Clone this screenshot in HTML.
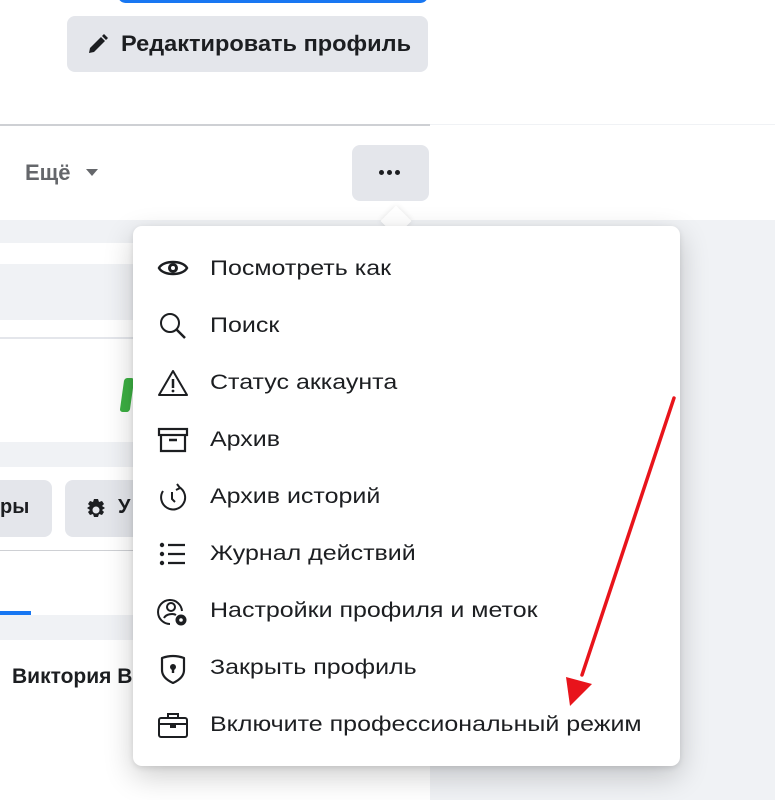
<!DOCTYPE html>
<html><head><meta charset="utf-8"><style>
body{margin:0;width:775px;height:800px;position:relative;overflow:hidden;background:#f0f2f5;font-family:"Liberation Sans",sans-serif;}
.a{position:absolute;}
.mi{position:absolute;left:0;width:547px;height:57px;}
.mi svg{position:absolute;left:24px;top:15px;}
.mi span{position:absolute;left:77px;top:17px;font-size:21px;color:#1c1e21;transform:scaleX(1.19);transform-origin:0 0;white-space:nowrap;}
</style></head><body>
<div class="a" style="left:0;top:0;width:775px;height:220px;background:#fff"></div>
<div class="a" style="left:0;top:124px;width:430px;height:2px;background:#ced0d4"></div>
<div class="a" style="left:430px;top:124px;width:345px;height:1px;background:#f0f2f5"></div>
<div class="a" style="left:118px;top:-12px;width:310px;height:15px;background:#1877f2;border-radius:8px"></div>
<div class="a" style="left:67px;top:16px;width:361px;height:56px;background:#e4e6eb;border-radius:8px"></div>
<svg class="a" style="left:86px;top:32px" width="24" height="24" viewBox="0 0 24 24"><path d="M3 21l1-5L15 5l4 4L8 20z M16 4l2-2 4 4-2 2z" fill="#1c1e21"/></svg>
<div class="a" style="left:121px;top:31px;font-size:22px;font-weight:bold;color:#1c1e21;transform:scaleX(1.07);transform-origin:0 0;white-space:nowrap">Редактировать профиль</div>
<div class="a" style="left:25px;top:160px;font-size:22px;font-weight:bold;color:#65676b">Ещё</div>
<div class="a" style="left:86px;top:169px;width:0;height:0;border-left:6px solid transparent;border-right:6px solid transparent;border-top:7px solid #65676b"></div>
<div class="a" style="left:352px;top:145px;width:77px;height:56px;background:#e4e6eb;border-radius:8px"></div>
<div class="a" style="left:379px;top:170px;font-size:0">
<span style="display:inline-block;width:5px;height:5px;border-radius:50%;background:#1c1e21;margin-right:3px"></span><span style="display:inline-block;width:5px;height:5px;border-radius:50%;background:#1c1e21;margin-right:3px"></span><span style="display:inline-block;width:5px;height:5px;border-radius:50%;background:#1c1e21"></span></div>
<!-- left column -->
<div class="a" style="left:0;top:243px;width:430px;height:199px;background:#fff"></div>
<div class="a" style="left:0;top:264px;width:430px;height:56px;background:#f0f2f5"></div>
<div class="a" style="left:0;top:337px;width:430px;height:2px;background:#e4e6eb"></div>
<div class="a" style="left:122px;top:378px;width:10px;height:34px;background:#3cb043;border-radius:3px;transform:skewX(-8deg)"></div>
<div class="a" style="left:0;top:467px;width:430px;height:148px;background:#fff"></div>
<div class="a" style="left:-10px;top:480px;width:62px;height:57px;background:#e4e6eb;border-radius:8px"></div>
<div class="a" style="left:0;top:496px;font-size:20px;font-weight:bold;color:#1c1e21">ры</div>
<div class="a" style="left:65px;top:480px;width:100px;height:57px;background:#e4e6eb;border-radius:8px"></div>
<svg class="a" style="left:84px;top:498px" width="24" height="24" viewBox="0 0 24 24"><path d="M10 1h4l1 3 3-1 2 3-2 2 3 2v0l-3 2 2 2-2 3-3-1-1 3h-4l-1-3-3 1-2-3 2-2-3-2 3-2-2-2 2-3 3 1z" fill="#1c1e21"/><circle cx="12" cy="12" r="3.5" fill="#e4e6eb"/></svg>
<div class="a" style="left:118px;top:496px;font-size:20px;font-weight:bold;color:#1c1e21">У</div>
<div class="a" style="left:0;top:550px;width:430px;height:1px;background:#ced0d4"></div>
<div class="a" style="left:0;top:611px;width:31px;height:4px;background:#1877f2"></div>
<div class="a" style="left:0;top:640px;width:430px;height:160px;background:#fff"></div>
<div class="a" style="left:12px;top:665px;font-size:21px;font-weight:bold;color:#1c1e21">Виктория В</div>
<!-- menu -->
<div class="a" style="left:385px;top:210px;width:22px;height:22px;background:#fff;transform:rotate(45deg);box-shadow:0 0 6px rgba(0,0,0,.1)"></div>
<div class="a" style="left:133px;top:226px;width:547px;height:540px;background:#fff;border-radius:9px;box-shadow:0 10px 30px rgba(0,0,0,.2),0 2px 6px rgba(0,0,0,.1)">
<div class="mi" style="top:14px"><svg width="32" height="26" viewBox="0 0 32 26"><path d="M2 13C6 5 26 5 30 13C26 21 6 21 2 13Z" fill="none" stroke="#1c1e21" stroke-width="2.5"/><circle cx="16" cy="13" r="5" fill="#1c1e21"/><circle cx="16" cy="13" r="2" fill="#fff"/></svg><span>Посмотреть как</span></div>
<div class="mi" style="top:71px"><svg width="32" height="28" viewBox="0 0 32 28"><circle cx="13" cy="11" r="9" fill="none" stroke="#1c1e21" stroke-width="2"/><path d="M19.5 17.5L28 26" stroke="#1c1e21" stroke-width="2.5"/></svg><span>Поиск</span></div>
<div class="mi" style="top:128px"><svg width="32" height="28" viewBox="0 0 32 28"><path d="M16 2L30 26H2Z" fill="none" stroke="#1c1e21" stroke-width="2" stroke-linejoin="round"/><path d="M16 10v9" stroke="#1c1e21" stroke-width="2.5"/><circle cx="16" cy="22" r="1.4" fill="#1c1e21"/></svg><span>Статус аккаунта</span></div>
<div class="mi" style="top:185px"><svg width="32" height="28" viewBox="0 0 32 28"><rect x="2" y="3" width="28" height="6" fill="none" stroke="#1c1e21" stroke-width="2.2"/><path d="M4 9v16h24V9" fill="none" stroke="#1c1e21" stroke-width="2.2"/><path d="M12 14h8" stroke="#1c1e21" stroke-width="2.5"/></svg><span>Архив</span></div>
<div class="mi" style="top:242px"><svg width="32" height="30" viewBox="0 0 32 30"><path d="M22 4A12 12 0 1 1 6 8" fill="none" stroke="#1c1e21" stroke-width="2"/><path d="M20 1l3 4-4 2" fill="none" stroke="#1c1e21" stroke-width="2"/><path d="M15 9v7l3 3" fill="none" stroke="#1c1e21" stroke-width="2"/></svg><span>Архив историй</span></div>
<div class="mi" style="top:299px"><svg width="32" height="28" viewBox="0 0 32 28"><circle cx="5" cy="5" r="2.2" fill="#1c1e21"/><circle cx="5" cy="14" r="2.2" fill="#1c1e21"/><circle cx="5" cy="23" r="2.2" fill="#1c1e21"/><path d="M11 5h17M11 14h17M11 23h17" stroke="#1c1e21" stroke-width="2.2"/></svg><span>Журнал действий</span></div>
<div class="mi" style="top:356px"><svg width="32" height="30" viewBox="0 0 32 30"><path d="M25 14A12 12 0 1 0 13 27" fill="none" stroke="#1c1e21" stroke-width="2"/><circle cx="14" cy="10" r="4" fill="none" stroke="#1c1e21" stroke-width="2"/><path d="M7 21c2-4 9-5 12-3" fill="none" stroke="#1c1e21" stroke-width="2"/><circle cx="24" cy="23" r="5.5" fill="#1c1e21"/><circle cx="24" cy="23" r="1.8" fill="#fff"/></svg><span>Настройки профиля и меток</span></div>
<div class="mi" style="top:413px"><svg width="32" height="30" viewBox="0 0 32 30"><path d="M5 4Q16 0 27 4V16Q27 24 16 29Q5 24 5 16Z" fill="none" stroke="#1c1e21" stroke-width="2.2" stroke-linejoin="round"/><circle cx="16" cy="13" r="3" fill="#1c1e21"/><path d="M16 13v6" stroke="#1c1e21" stroke-width="2.4"/></svg><span>Закрыть профиль</span></div>
<div class="mi" style="top:470px"><svg width="32" height="28" viewBox="0 0 32 28"><path d="M11 7V3h10v4" fill="none" stroke="#1c1e21" stroke-width="2"/><rect x="2" y="7" width="28" height="19" rx="2" fill="none" stroke="#1c1e21" stroke-width="2"/><path d="M2 13h28" stroke="#1c1e21" stroke-width="2"/><rect x="13" y="12" width="6" height="5" fill="#1c1e21"/></svg><span>Включите профессиональный режим</span></div>
</div>
<svg class="a" style="left:0;top:0" width="775" height="800"><path d="M674 398L582 675" stroke="#e8141b" stroke-width="3.5" stroke-linecap="round"/><path d="M570 706L566 677L592 684Z" fill="#e8141b"/></svg>
</body></html>
